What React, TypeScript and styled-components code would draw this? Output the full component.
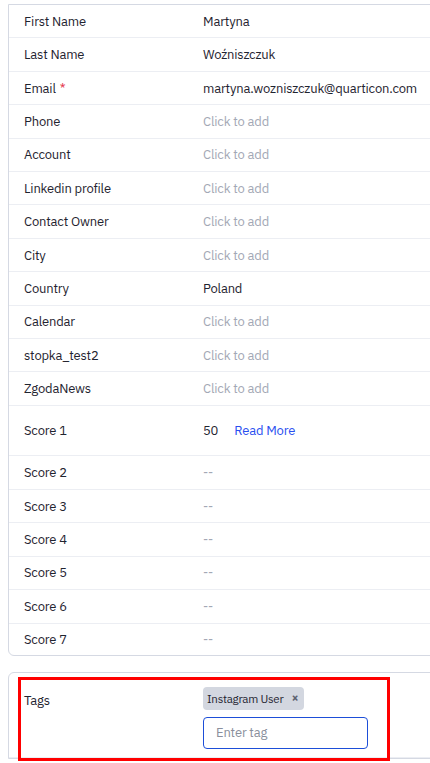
import React from "react";
import styled, { createGlobalStyle } from "styled-components";

const Global = createGlobalStyle`
  html, body { margin: 0; padding: 0; background: #ffffff; overflow: hidden; }
  body { font-family: "IBM Plex Sans", Inter, "Noto Sans", sans-serif; -webkit-font-smoothing: antialiased; }
`;

const Page = styled.div`
  width: 430px;
  height: 763px;
  overflow: hidden;
  padding: 4px 0 0 8px;
  box-sizing: border-box;
  display: flex;
  flex-direction: column;
  gap: 16px;
`;

const Card = styled.div<{ $flatTop?: boolean }>`
  position: relative;
  width: 440px;
  flex-shrink: 0;
  border: 1px solid #d5d9e3;
  border-radius: ${(p) => (p.$flatTop ? "0 0 6px 6px" : "6px 6px 0 0")};
  background: #fff;
  box-sizing: border-box;
`;

const Row = styled.div<{ $tall?: boolean; $last?: boolean }>`
  display: grid;
  grid-template-columns: 179px 1fr;
  align-items: center;
  padding: 0 0 0 15px;
  height: ${(p) => (p.$tall ? "49.6px" : p.$last ? "31px" : "32.42px")};
  border-bottom: ${(p) => (p.$last ? "none" : "1px solid #eceef3")};
  font-size: 13px;
  line-height: 19px;
  letter-spacing: -0.18px;
`;

const Label = styled.div`
  color: #1f2430;
  white-space: nowrap;
`;

const Required = styled.span`
  color: #e5384f;
  margin-left: 4px;
`;

const Value = styled.div<{ $muted?: boolean }>`
  color: ${(p) => (p.$muted ? "#a3a8b5" : "#1f2430")};
  white-space: nowrap;
  display: flex;
  align-items: center;
  gap: 16px;
`;

const ReadMore = styled.a`
  color: #2a4ff0;
  text-decoration: none;
`;

const TagsRow = styled.div`
  display: grid;
  grid-template-columns: 179px 1fr;
  padding: 14px 0 8px 15px;
  border-bottom: 1px solid #eceef3;
  font-size: 13px;
  line-height: 19px;
  letter-spacing: -0.18px;
`;

const TagsLabel = styled.div`
  color: #1f2430;
  padding-top: 4.5px;
`;

const TagsCol = styled.div`
  display: flex;
  flex-direction: column;
  align-items: flex-start;
  gap: 7px;
`;

const Chip = styled.span`
  display: inline-flex;
  align-items: center;
  gap: 8px;
  height: 23px;
  padding: 0 6px 0 4px;
  background: #d3d7e0;
  border-radius: 4px;
  font-size: 11.5px;
  letter-spacing: -0.25px;
  color: #1f2430;
`;

const ChipX = styled.span`
  font-size: 12px;
  font-weight: 700;
  color: #5c6270;
  line-height: 1;
`;

const TagInput = styled.input`
  width: 165px;
  height: 32px;
  box-sizing: border-box;
  border: 1px solid #1d4ed8;
  border-radius: 4px;
  padding: 0 12px;
  font-family: inherit;
  font-size: 13px;
  letter-spacing: -0.18px;
  color: #1f2430;
  outline: none;
  &::placeholder { color: #8a8f9c; }
`;

const Highlight = styled.div`
  position: absolute;
  left: 9px;
  top: 4px;
  width: 372px;
  height: 84px;
  border: 3.5px solid #ff0000;
  box-sizing: border-box;
  pointer-events: none;
`;

type Field = { label: string; value?: string; required?: boolean };

const fields: Field[] = [
  { label: "First Name", value: "Martyna" },
  { label: "Last Name", value: "Woźniszczuk" },
  { label: "Email", value: "martyna.wozniszczuk@quarticon.com", required: true },
  { label: "Phone" },
  { label: "Account" },
  { label: "Linkedin profile" },
  { label: "Contact Owner" },
  { label: "City" },
  { label: "Country", value: "Poland" },
  { label: "Calendar" },
  { label: "stopka_test2" },
  { label: "ZgodaNews" },
];

const scores = ["Score 2", "Score 3", "Score 4", "Score 5", "Score 6", "Score 7"];

export default function App() {
  return (
    <>
      <Global />
      <Page>
        <Card $flatTop>
          {fields.map((f) => (
            <Row key={f.label}>
              <Label>
                {f.label}
                {f.required && <Required>*</Required>}
              </Label>
              {f.value ? <Value>{f.value}</Value> : <Value $muted>Click to add</Value>}
            </Row>
          ))}
          <Row $tall>
            <Label>Score 1</Label>
            <Value>
              50 <ReadMore href="#">Read More</ReadMore>
            </Value>
          </Row>
          {scores.map((s, i) => (
            <Row key={s} $last={i === scores.length - 1}>
              <Label>{s}</Label>
              <Value $muted>--</Value>
            </Row>
          ))}
        </Card>
        <Card>
          <TagsRow>
            <TagsLabel>Tags</TagsLabel>
            <TagsCol>
              <Chip>
                Instagram User <ChipX>×</ChipX>
              </Chip>
              <TagInput placeholder="Enter tag" />
            </TagsCol>
          </TagsRow>
          <Highlight />
        </Card>
      </Page>
    </>
  );
}
